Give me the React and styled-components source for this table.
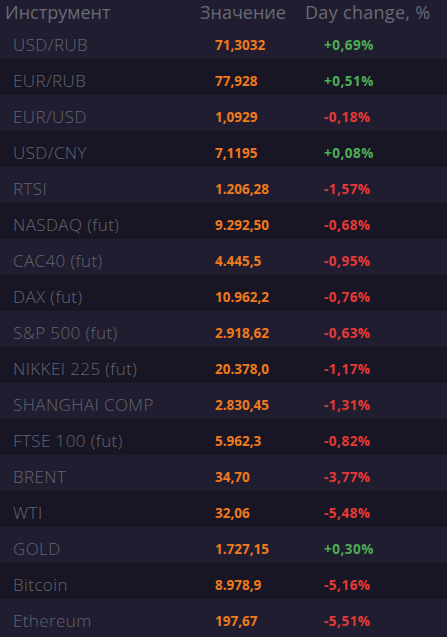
import React from "react";
import styled, { createGlobalStyle } from "styled-components";

const Global = createGlobalStyle`
  html, body { margin: 0; padding: 0; background: #1f1d2f; }
  #root { width: 447px; }
`;

const Table = styled.div`
  width: 447px;
  display: flex;
  flex-direction: column;
  background: #1f1d2f;
`;

const HeaderRow = styled.div`
  display: grid;
  grid-template-columns: 195px 105px 1fr;
  height: 23px;
  align-items: end;
  padding-left: 5px;
  font-family: "Open Sans", sans-serif;
  font-size: 18px;
  color: #6b6975;
  line-height: 20px;
  padding-bottom: 1px;
  box-sizing: border-box;
`;

const HeadCell = styled.div`
  white-space: nowrap;
  letter-spacing: ${(p) => p.$ls || "0"};
`;

const Row = styled.div`
  display: grid;
  grid-template-columns: 202px 109px 1fr;
  height: 36px;
  box-sizing: border-box;
  padding-top: 7px;
  align-items: center;
  padding-left: 13px;
  background: ${(p) => (p.$odd ? "#1f1d2f" : "#181624")};
`;

const Name = styled.div`
  font-family: "Open Sans", sans-serif;
  font-weight: 300;
  font-size: 17px;
  letter-spacing: 0.4px;
  color: #66646f;
  white-space: nowrap;
`;

const Value = styled.div`
  font-family: "Open Sans", sans-serif;
  font-weight: 700;
  font-size: 13.5px;
  color: #f07a1c;
  white-space: nowrap;
`;

const Change = styled.div`
  font-family: "Open Sans", sans-serif;
  font-weight: 700;
  font-size: 13.5px;
  letter-spacing: 0.5px;
  color: ${(p) => (p.$up ? "#4cae54" : "#e53a37")};
  white-space: nowrap;
`;

const data = [
  ["USD/RUB", "71,3032", "+0,69%"],
  ["EUR/RUB", "77,928", "+0,51%"],
  ["EUR/USD", "1,0929", "-0,18%"],
  ["USD/CNY", "7,1195", "+0,08%"],
  ["RTSI", "1.206,28", "-1,57%"],
  ["NASDAQ (fut)", "9.292,50", "-0,68%"],
  ["CAC40 (fut)", "4.445,5", "-0,95%"],
  ["DAX (fut)", "10.962,2", "-0,76%"],
  ["S&P 500 (fut)", "2.918,62", "-0,63%"],
  ["NIKKEI 225 (fut)", "20.378,0", "-1,17%"],
  ["SHANGHAI COMP", "2.830,45", "-1,31%"],
  ["FTSE 100 (fut)", "5.962,3", "-0,82%"],
  ["BRENT", "34,70", "-3,77%"],
  ["WTI", "32,06", "-5,48%"],
  ["GOLD", "1.727,15", "+0,30%"],
  ["Bitcoin", "8.978,9", "-5,16%"],
  ["Ethereum", "197,67", "-5,51%"],
];

export default function App() {
  return (
    <>
      <Global />
      <Table>
        <HeaderRow>
          <HeadCell>Инструмент</HeadCell>
          <HeadCell>Значение</HeadCell>
          <HeadCell $ls="0.3px">Day change, %</HeadCell>
        </HeaderRow>
        {data.map(([n, v, c], i) => (
          <Row key={n} $odd={i % 2 === 0}>
            <Name>{n}</Name>
            <Value>{v}</Value>
            <Change $up={c.startsWith("+")}>{c}</Change>
          </Row>
        ))}
      </Table>
    </>
  );
}
